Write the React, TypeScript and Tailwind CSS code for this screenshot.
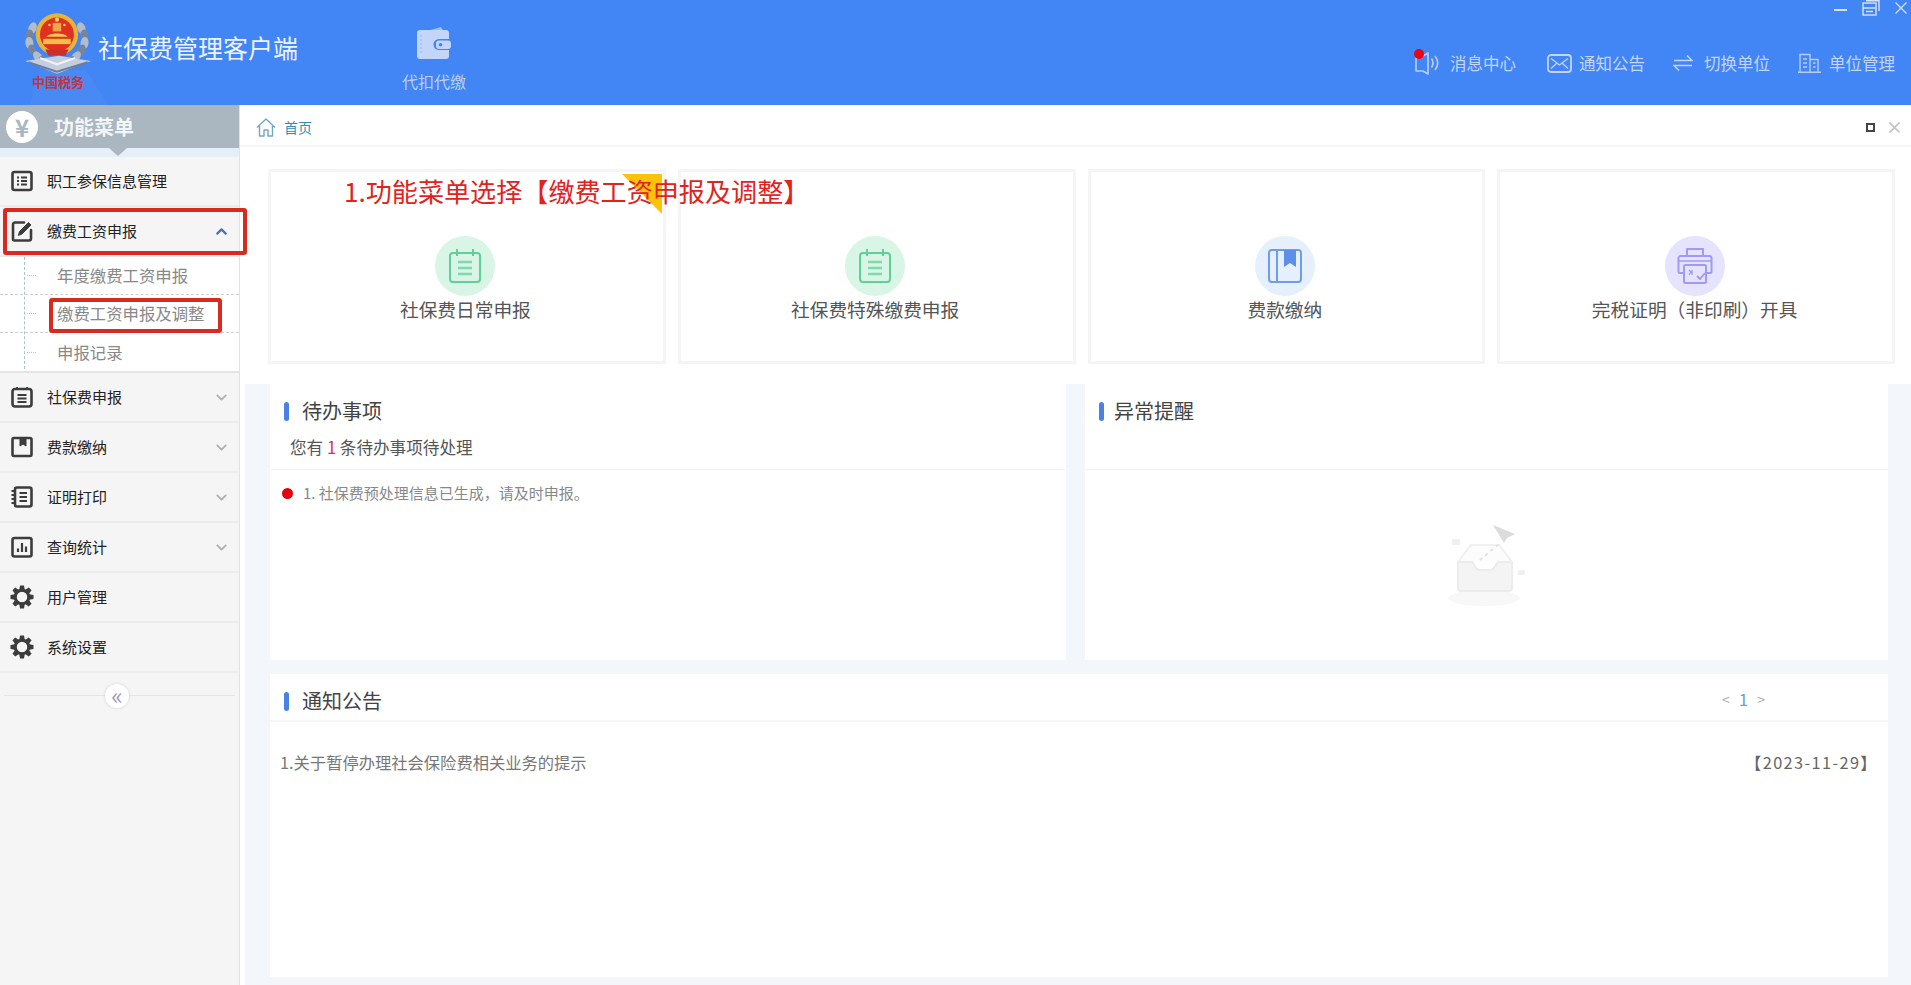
import type { ReactNode } from "react";
import { ChevronDown, ChevronUp } from "lucide-react";

/* ---------- small drawn icons ---------- */

function IconFrame({ children, size = 24, stroke = "#3c3c3c", width = 2.6 }: { children: ReactNode; size?: number; stroke?: string; width?: number }) {
  return (
    <svg width={size} height={size} viewBox="0 0 24 24" fill="none" stroke={stroke} strokeWidth={width} strokeLinecap="round" strokeLinejoin="round">
      {children}
    </svg>
  );
}

function GearIcon() {
  const teeth = [0, 45, 90, 135, 180, 225, 270, 315];
  return (
    <svg width={24} height={24} viewBox="0 0 24 24">
      {teeth.map((a) => (
        <path key={a} d="M10 0.500h4l1 6h-6z" fill="#3c3c3c" transform={`rotate(${a} 12 12)`} />
      ))}
      <circle cx="12" cy="12" r="6.800" fill="none" stroke="#3c3c3c" strokeWidth="3" />
    </svg>
  );
}

const menuIcons: Record<string, ReactNode> = {
  table: (
    <IconFrame>
      <rect x="2.500" y="3" width="19" height="18" rx="2" />
      <path d="M7 8.500h2M11 8.500h6M7 12h2M11 12h6M7 15.500h2M11 15.500h6" strokeWidth="2.200" strokeLinecap="butt" />
    </IconFrame>
  ),
  edit: (
    <IconFrame>
      <path d="M14 3.500H5a2 2 0 0 0-2 2V20a1.500 1.500 0 0 0 1.500 1.500H19a2 2 0 0 0 2-2V11" />
      <path d="M8.500 16l1-3.500L18.500 3.500l2.500 2.500-9 9z" fill="#3c3c3c" stroke="#3c3c3c" strokeWidth="1" />
    </IconFrame>
  ),
  note: (
    <IconFrame>
      <rect x="2.500" y="4" width="19" height="17.500" rx="2.500" />
      <path d="M7 2v3M17 2v3M7.500 10h9M7.500 13.500h9M7.500 17h9" strokeWidth="1.800" strokeLinecap="butt" />
    </IconFrame>
  ),
  book: (
    <IconFrame>
      <rect x="2.500" y="3" width="19" height="18" rx="1.500" />
      <path d="M10 3v8l3-2 3 2V3z" fill="#3c3c3c" strokeWidth="1" />
    </IconFrame>
  ),
  print: (
    <IconFrame>
      <rect x="5" y="2.500" width="16.500" height="19" rx="2" />
      <path d="M9.500 8h7.500M9.500 12h7.500M9.500 16h7.500" strokeWidth="2.200" strokeLinecap="butt" />
      <path d="M1.500 6h3M1.500 10h3M1.500 14h3M1.500 18h3" strokeWidth="2" strokeLinecap="butt" />
    </IconFrame>
  ),
  chart: (
    <IconFrame>
      <rect x="2.500" y="3" width="19" height="18.500" rx="2" />
      <path d="M8 17v-3.500M12 17V8M16 17v-5.500" strokeWidth="2.200" strokeLinecap="butt" />
    </IconFrame>
  ),
  gear: <GearIcon />,
};

function NoteBadgeIcon() {
  return (
    <svg width={34} height={36} viewBox="0 0 34 36" fill="none" stroke="#5fd09a" strokeWidth="2">
      <rect x="2" y="5" width="30" height="29" rx="3" />
      <path d="M9 1v7M25 1v7" />
      <path d="M10 14h14M10 20h14M10 26h14" strokeWidth="2.400" stroke="#7ddbad" />
    </svg>
  );
}

function BookBadgeIcon() {
  return (
    <svg width={36} height={36} viewBox="0 0 36 36" fill="none" stroke="#6f9de8" strokeWidth="2">
      <rect x="2" y="2" width="32" height="32" rx="3" />
      <path d="M10 2v32" />
      <path d="M17 2h12v17l-6-4-6 4z" fill="#5b8fe8" stroke="none" />
    </svg>
  );
}

function PrinterBadgeIcon() {
  return (
    <svg width={36} height={38} viewBox="0 0 36 38" fill="none" stroke="#a09af5" strokeWidth="2" strokeLinejoin="round">
      <path d="M10 9V2h16v7" />
      <path d="M7 26H3a1.500 1.500 0 0 1-1.500-1.500V11A2 2 0 0 1 3.500 9h29A2 2 0 0 1 34.500 11v13.500A1.500 1.500 0 0 1 33 26h-4" />
      <rect x="7" y="18" width="22" height="18" rx="1.500" />
      <path d="M2 14h32" strokeWidth="1.500" />
      <path d="M20 29l3 3 5-6" strokeWidth="1.800" />
      <path d="M12 23l2 2-2 3M15 23v5" strokeWidth="1.300" />
    </svg>
  );
}

function EmblemLogo() {
  const leaves = [
    [33, 26], [30, 33], [30, 40], [33, 47], [38, 53], [44, 57], [79, 26], [82, 33], [82, 40], [79, 47], [74, 53], [68, 57],
  ];
  return (
    <svg width={70} height={66} viewBox="24 8 66 62">
      {leaves.map(([x, y], i) => (
        <ellipse key={i} cx={x} cy={y} rx="3.800" ry="5.800" fill={i % 2 ? "#76859f" : "#b2bdcc"} transform={`rotate(${x < 56 ? (y - 36) * -2 : (y - 36) * 2} ${x} ${y})`} />
      ))}
      <circle cx="56" cy="32" r="20" fill="#e8b33a" />
      <circle cx="56" cy="32" r="16" fill="#e1301f" />
      <path d="M43 36h26v5H43z" fill="#f0c04a" />
      <path d="M46 34c3-4 17-4 20 0z" fill="#f3c656" />
      <rect x="52" y="21" width="8" height="8" fill="#f3c656" opacity="0.800" />
      <circle cx="56" cy="18" r="2" fill="#f7d465" />
      <circle cx="49" cy="23" r="1.200" fill="#f7d465" />
      <circle cx="63" cy="23" r="1.200" fill="#f7d465" />
      <path d="M45 46h22l-3 6H48z" fill="#c8302a" />
      <path d="M26 57l30 12 32-12-30-5z" fill="#c4cedd" />
      <path d="M29 58l27 9 29-9" fill="none" stroke="#6d7d99" strokeWidth="2" />
      <path d="M40 54l16 6 17-6" fill="none" stroke="#eef1f6" strokeWidth="2" />
    </svg>
  );
}

function WalletIcon() {
  return (
    <svg width={34} height={33} viewBox="0 0 34 33">
      <path d="M3 7L24 1l3 5z" fill="#9fbdf6" />
      <path d="M0 7a3 3 0 0 1 3-3h26a3 3 0 0 1 3 3v6H22a5.500 5.500 0 0 0 0 11h10v6a3 3 0 0 1-3 3H3a3 3 0 0 1-3-3z" fill="#c3d6fa" />
      <rect x="19" y="14.500" width="15" height="8.500" rx="3" fill="#c3d6fa" />
      <circle cx="23.500" cy="18.800" r="1.800" fill="#4285f4" />
      <path d="M4 9v20" stroke="#a3bff5" strokeWidth="1.400" strokeDasharray="2 2" />
    </svg>
  );
}

function SpeakerIcon() {
  return (
    <span className="relative block h-[24px] w-[26px]">
      <svg width={26} height={24} viewBox="0 0 26 24" fill="none" stroke="#b7cdf8" strokeWidth="1.700">
        <path d="M2 5h7l5-3v21l-5-3H2z" strokeLinejoin="round" />
        <path d="M17.500 7.500c2 3 2 6 0 9M21 5c3.500 4.500 3.500 9.500 0 14" />
      </svg>
      <span className="absolute left-0 top-[-2px] h-[10px] w-[10px] rounded-full bg-[#f00010]" />
    </span>
  );
}

function MailIcon() {
  return (
    <svg width={25} height={19} viewBox="0 0 25 19" fill="none" stroke="#c3d6fa" strokeWidth="1.800">
      <rect x="1" y="1" width="23" height="17" rx="3" />
      <path d="M4 4.500l8.500 6.500L21 4.500M4 14.500l5.500-5M21 14.500l-5.500-5" strokeWidth="1.300" />
    </svg>
  );
}

function SwapIcon() {
  return (
    <svg width={20} height={18} viewBox="0 0 20 18" fill="none" stroke="#c3d6fa" strokeWidth="1.500">
      <path d="M1 6.500h18L14 1.500M19 11.500H1l5 5" />
    </svg>
  );
}

function BuildingIcon() {
  return (
    <svg width={23} height={20} viewBox="0 0 23 20" fill="none" stroke="#b7cdf8" strokeWidth="1.400">
      <path d="M2 19V1.500h10V19M12 6.500h8V19M0 19.300h23" />
      <path d="M5 6h4M5 10h4M5 14h4M15 10h2.500M15 14h2.500" />
    </svg>
  );
}

function RestoreIcon() {
  return (
    <svg width={18} height={16} viewBox="0 0 18 16" fill="none" stroke="#d6e2fb" strokeWidth="1.400">
      <rect x="1" y="3" width="13" height="12" />
      <path d="M4 0.800h13V11M1 8h13M4 11.500h7" />
    </svg>
  );
}

function CrossIcon({ size, color, width = 1.200 }: { size: number; color: string; width?: number }) {
  return (
    <svg width={size} height={size} viewBox="0 0 12 12" fill="none" stroke={color} strokeWidth={width}>
      <path d="M0.500 0.500l11 11M11.500 0.500l-11 11" />
    </svg>
  );
}

function HomeIcon() {
  return (
    <svg width={20} height={19} viewBox="0 0 20 19" fill="none" stroke="#6fa6c8" strokeWidth="1.400" strokeLinejoin="round">
      <path d="M1 9.500L10 1l9 8.500M3.500 8v10h4.500v-6h4v6h4.500V8" />
    </svg>
  );
}

function EmptyTray() {
  return (
    <svg width={120} height={100} viewBox="0 0 120 100" fill="none">
      <ellipse cx="56" cy="88" rx="36" ry="8" fill="#f8f8f8" />
      <path d="M30 52l13-17h28l13 17" fill="#fcfcfc" stroke="#f0f0f0" strokeWidth="2" />
      <path d="M30 52h14c2 0 2 8 8 8h10c6 0 6-8 8-8h14v26a3 3 0 0 1-3 3H33a3 3 0 0 1-3-3z" fill="#f4f4f4" stroke="#ececec" strokeWidth="2" />
      <path d="M52 50L72 33M75 30L84 22" stroke="#e2e2e2" strokeWidth="2" strokeDasharray="3 4" />
      <path d="M65 15l22 9-8 4-3 5z" fill="#dcdcdc" />
      <rect x="24" y="29" width="8" height="6" rx="1" fill="#f0f0f0" />
      <rect x="90" y="60" width="7" height="5" rx="1" fill="#f0f0f0" />
    </svg>
  );
}

/* ---------- data ---------- */

const shortcuts = [
  { label: "社保费日常申报", circle: "bg-[#d9f5e6]", icon: <NoteBadgeIcon /> },
  { label: "社保费特殊缴费申报", circle: "bg-[#d9f5e6]", icon: <NoteBadgeIcon /> },
  { label: "费款缴纳", circle: "bg-[#e6f0fd]", icon: <BookBadgeIcon /> },
  { label: "完税证明（非印刷）开具", circle: "bg-[#e5e3fd]", icon: <PrinterBadgeIcon /> },
];

const topLinks = [
  { label: "消息中心", icon: <SpeakerIcon />, gap: "gap-[10px] mr-[3px]" },
  { label: "通知公告", icon: <MailIcon />, gap: "gap-[7px]" },
  { label: "切换单位", icon: <SwapIcon />, gap: "gap-[11px]" },
  { label: "单位管理", icon: <BuildingIcon />, gap: "gap-[8px]" },
];

function MenuRow({ icon, label, chevron }: { icon: string; label: string; chevron?: "up" | "down" }) {
  return (
    <div className="flex h-[50px] items-center border-b-2 border-[#ececec] pl-[10px] pr-[9px]">
      <span className="flex w-[37px] shrink-0">{menuIcons[icon]}</span>
      <span className="text-[15px] text-[#222]">{label}</span>
      {chevron === "down" && <ChevronDown size={17} strokeWidth={2.6} className="ml-auto text-[#b0b0b0]" />}
      {chevron === "up" && <ChevronUp size={17} strokeWidth={3} className="ml-auto text-[#4a73a8]" />}
    </div>
  );
}

function SubMenu() {
  const items = ["年度缴费工资申报", "缴费工资申报及调整", "申报记录"];
  return (
    <div className="relative flex flex-col border-b-2 border-[#e4e4e4] bg-white">
      {items.map((item, i) => (
        <div key={item} className={`flex h-[38px] items-center pl-[57px] text-[16.400px] text-[#888] ${i < 2 ? "border-b border-dashed border-[#cfcfcf]" : ""}`}>
          <span className="absolute left-[27px] w-[9px] border-t border-dotted border-[#b8c8c8]" />
          {item}
        </div>
      ))}
      <span className="absolute bottom-[2px] left-[24px] top-0 border-l border-dashed border-[#a9c5c5]" />
    </div>
  );
}

function PanelTitle({ children, gap = "ml-[13px]" }: { children: ReactNode; gap?: string }) {
  return (
    <div className="flex items-center">
      <span className="h-[19px] w-[5px] rounded-full bg-[#4a82e4]" />
      <span className={`${gap} text-[20px] leading-[26px] text-[#444]`}>{children}</span>
    </div>
  );
}

function Sidebar() {
  return (
    <aside className="flex w-[240px] shrink-0 flex-col border-r border-[#e2e2e2] bg-[#f5f5f5]">
      <div className="relative flex h-[43px] items-center bg-[#aab6c0] pl-[6px]">
        <span className="flex h-[32px] w-[32px] items-center justify-center rounded-full bg-white text-[24px] font-bold leading-none text-[#aab6c0]">¥</span>
        <span className="ml-[16px] text-[20px] font-bold text-[#f3f5f7]">功能菜单</span>
        <span className="absolute left-[109px] top-full h-0 w-0 border-x-[9px] border-t-[8px] border-x-transparent border-t-[#aab6c0]" />
      </div>
      <div className="h-[9px] bg-[#e6eef8]" />
      <MenuRow icon="table" label="职工参保信息管理" />
      <MenuRow icon="edit" label="缴费工资申报" chevron="up" />
      <SubMenu />
      <MenuRow icon="note" label="社保费申报" chevron="down" />
      <MenuRow icon="book" label="费款缴纳" chevron="down" />
      <MenuRow icon="print" label="证明打印" chevron="down" />
      <MenuRow icon="chart" label="查询统计" chevron="down" />
      <MenuRow icon="gear" label="用户管理" />
      <MenuRow icon="gear" label="系统设置" />
      <div className="relative mx-[4px] mt-[22px] border-t border-[#e4e4e4]">
        <span className="absolute left-[101px] top-[-12px] flex h-[24px] w-[24px] items-center justify-center rounded-full bg-white pb-[3px] text-[24px] leading-none text-[#9a9ab8] shadow-[0_0_3px_#ccc]">«</span>
      </div>
    </aside>
  );
}

function Header() {
  return (
    <header className="relative flex h-[105px] shrink-0 bg-[#4285f4] text-white">
      <svg width={120} height={105} viewBox="0 0 120 105" className="absolute left-0 top-0">
        <path d="M30 105L40 70h46l22 35z" fill="#ffffff" opacity="0.040" />
      </svg>
      <div className="relative ml-[22px] flex w-[72px] flex-col items-center pt-[9px]">
        <EmblemLogo />
        <span className="mt-[-1px] whitespace-nowrap font-['Liberation_Serif','Noto_Sans_CJK_SC',serif] text-[13px] font-bold leading-[18px] text-[#c9323c]">中国税务</span>
      </div>
      <h1 className="ml-[4px] mt-[31px] text-[25px] font-normal leading-[32px] text-[#edf3fe]">社保费管理客户端</h1>
      <div className="ml-[96px] flex w-[80px] flex-col items-center pt-[26px]">
        <WalletIcon />
        <span className="mt-[12px] text-[16px] leading-[20px] text-[#bcd0f6]">代扣代缴</span>
      </div>
      <div className="ml-auto flex flex-col items-end pr-[16px]">
        <div className="flex h-[17px] items-start gap-[15px]">
          <span className="mt-[9px] w-[13px] border-t-2 border-[#d6e2fb]" />
          <RestoreIcon />
          <span className="mr-[-12px] mt-[2px]"><CrossIcon size={12} color="#d6e2fb" /></span>
        </div>
        <nav className="mt-[33px] flex h-[26px] items-center gap-[28px]">
          {topLinks.map((link) => (
            <span key={link.label} className={`flex items-center ${link.gap} text-[16.500px] text-[#c3d6fa]`}>
              {link.icon}
              {link.label}
            </span>
          ))}
        </nav>
      </div>
    </header>
  );
}

function Shortcuts() {
  return (
    <div className="grid grid-cols-4 gap-[12px] pb-[20px] pl-[28px] pr-[16px] pt-[22px]">
      {shortcuts.map((card, i) => (
        <div key={card.label} className="relative flex h-[195px] flex-col items-center border-[3px] border-[#f5f5f5] bg-white pr-[3px] pt-[64px]">
          <span className={`flex h-[60px] w-[60px] items-center justify-center rounded-full ${card.circle}`}>{card.icon}</span>
          <span className="mt-[-2px] text-[18.700px] leading-[30px] text-[#555]">{card.label}</span>
          {i === 0 && (
            <span className="absolute right-[1px] top-[2px] h-0 w-0 border-l-[40px] border-t-[40px] border-l-transparent border-t-[#fdc30a]" />
          )}
        </div>
      ))}
    </div>
  );
}

function Main() {
  return (
    <main className="flex min-w-0 flex-1 flex-col bg-white">
      <div className="flex h-[42px] shrink-0 items-center border-b-2 border-[#f6f6f6] pl-[16px] pr-[11px] pt-[4px]">
        <HomeIcon />
        <span className="ml-[8px] text-[14px] text-[#2a8fbd]">首页</span>
        <span className="ml-auto mr-[1px] h-[9px] w-[9px] border-2 border-[#444]" />
        <span className="ml-[13px]"><CrossIcon size={11} color="#c4c4c4" width={1.800} /></span>
      </div>
      <Shortcuts />
      <div className="ml-[5px] flex flex-1 flex-col gap-[14px] bg-[#f3f6fa] pb-[8px] pl-[25px] pr-[23px]">
        <div className="flex h-[276px] gap-[19px]">
          <section className="w-[796px] bg-white">
            <div className="h-[86px] border-b border-[#f3f3f3] pl-[14px] pt-[14px]">
              <PanelTitle>待办事项</PanelTitle>
              <p className="mt-[11px] pl-[6px] text-[16.600px] leading-[24px] text-[#555]">
                您有 <span className="text-[#e0304a]">1</span> 条待办事项待处理
              </p>
            </div>
            <div className="flex h-[46px] items-center pl-[12px]">
              <span className="h-[11px] w-[11px] rounded-full bg-[#e8000d]" />
              <span className="ml-[10px] text-[15px] text-[#888]">1. 社保费预处理信息已生成，请及时申报。</span>
            </div>
          </section>
          <section className="flex-1 bg-white">
            <div className="h-[86px] border-b border-[#f3f3f3] pl-[14px] pt-[14px]">
              <PanelTitle gap="ml-[10px]">异常提醒</PanelTitle>
            </div>
            <div className="flex justify-center pl-[2px] pt-[40px]">
              <EmptyTray />
            </div>
          </section>
        </div>
        <section className="flex-1 bg-white">
          <div className="flex h-[48px] items-center border-b-2 border-[#f6f7f9] pl-[14px] pr-[123px] pt-[8px]">
            <PanelTitle>通知公告</PanelTitle>
            <span className="ml-auto mt-[-4px] flex items-center gap-[9px] text-[14px] text-[#aaa]">
              <span>&lt;</span>
              <span className="text-[17px] text-[#6f9fe0]">1</span>
              <span>&gt;</span>
            </span>
          </div>
          <div className="flex h-[80px] items-center pl-[10px] pr-[10px] text-[16.300px] text-[#777]">
            <span>1.关于暂停办理社会保险费相关业务的提示</span>
            <span className="ml-auto tracking-[1.400px] text-[#666]">【2023-11-29】</span>
          </div>
        </section>
      </div>
    </main>
  );
}

export default function App() {
  return (
    <div className="relative flex h-[985px] w-[1911px] flex-col overflow-hidden bg-white font-['Noto_Sans_CJK_SC','Liberation_Sans',sans-serif]">
      <Header />
      <div className="flex min-h-0 flex-1">
        <Sidebar />
        <Main />
      </div>
      {/* tutorial annotations drawn over the app */}
      <span className="absolute left-[344px] top-[172px] text-[26.100px] leading-[38px] text-[#e0241c]">1.功能菜单选择【缴费工资申报及调整】</span>
      <span className="absolute left-[3px] top-[208px] h-[47px] w-[244px] rounded-[3px] border-[4px] border-[#d92a20]" />
      <span className="absolute left-[49px] top-[298px] h-[35px] w-[173px] rounded-[3px] border-[4px] border-[#d92a20]" />
    </div>
  );
}
